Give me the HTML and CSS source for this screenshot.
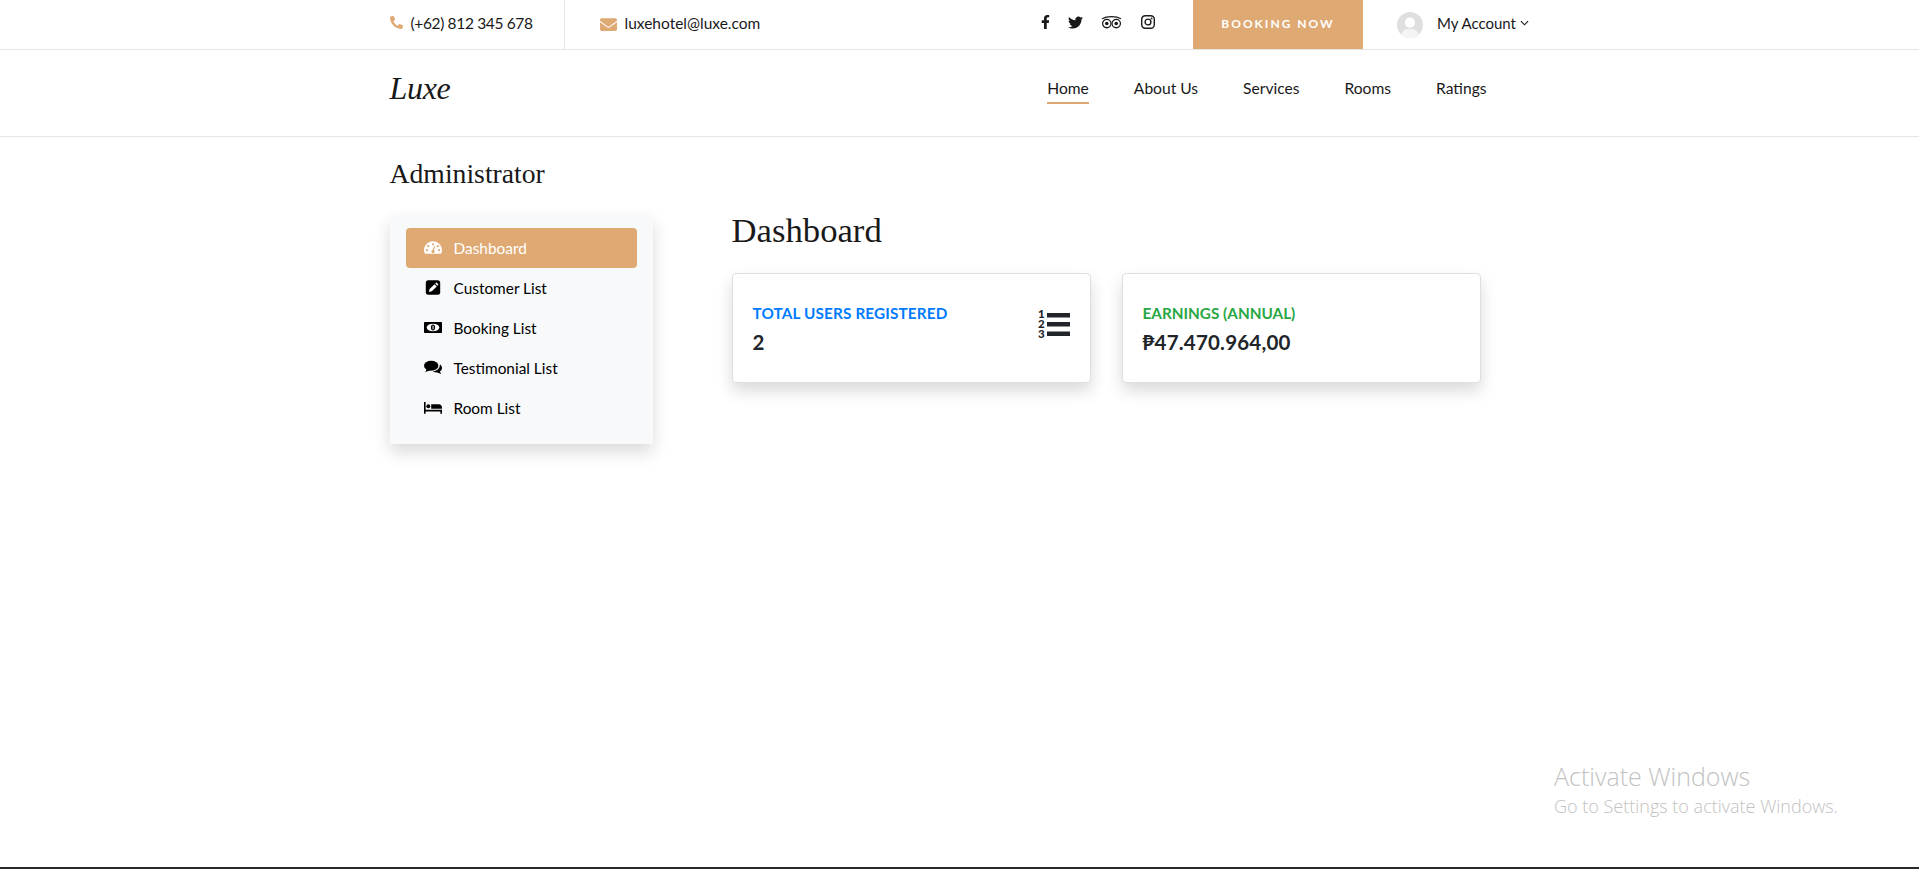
FILE: index.html
```html
<!DOCTYPE html>
<html lang="en">
<head>
<meta charset="utf-8">
<title>Luxe Hotel - Dashboard</title>
<link rel="stylesheet" href="styles.css">
</head>
<body>
<header class="topbar">
  <div class="container topbar-in">
    <div class="contact contact-phone">
      <svg class="ic-phone" viewBox="0 0 512 512"><path transform="matrix(-1 0 0 1 512 0)" d="M493.4 24.6l-104-24c-11.3-2.6-22.9 3.3-27.5 13.9l-48 112c-4.2 9.8-1.4 21.3 6.9 28l60.6 49.6c-36 76.7-98.9 140.5-177.2 177.2l-49.6-60.6c-6.8-8.3-18.2-11.1-28-6.9l-112 48C3.9 366.5-2 378.1.6 389.4l24 104C27.1 504.2 36.7 512 48 512c256.1 0 464-207.5 464-464 0-11.2-7.7-20.9-18.6-23.4z"/></svg>
      <span class="phone-num">(+62) 812 345 678</span>
    </div>
    <div class="contact contact-mail">
      <svg class="ic-mail" viewBox="0 0 512 512"><path d="M502.3 190.8c3.9-3.1 9.7-.2 9.7 4.7V400c0 26.5-21.5 48-48 48H48c-26.5 0-48-21.5-48-48V195.6c0-5 5.7-7.8 9.7-4.7 22.4 17.4 52.1 39.5 154.1 113.6 21.1 15.4 56.7 47.8 92.2 47.6 35.7.3 72-32.8 92.3-47.6 102-74.1 131.6-96.3 154-113.7zM256 320c23.2.4 56.6-29.2 73.4-41.4 132.7-96.3 142.8-104.7 173.4-128.7 5.8-4.5 9.2-11.5 9.2-18.9v-19c0-26.5-21.5-48-48-48H48C21.5 64 0 85.5 0 112v19c0 7.4 3.4 14.3 9.2 18.9 30.6 23.9 40.7 32.4 173.4 128.7 16.8 12.2 50.2 41.8 73.4 41.4z"/></svg>
      <span>luxehotel@luxe.com</span>
    </div>
    <div class="social">
      <svg class="s-fb" viewBox="0 0 320 512"><path d="M279.14 288l14.22-92.66h-88.91v-60.13c0-25.35 12.42-50.06 52.24-50.06h40.42V6.26S260.43 0 225.36 0c-73.22 0-121.08 44.38-121.08 124.72v70.62H22.89V288h81.39v224h100.17V288z"/></svg>
      <svg class="s-tw" viewBox="0 0 512 512"><path d="M459.37 151.716c.325 4.548.325 9.097.325 13.645 0 138.72-105.583 298.558-298.558 298.558-59.452 0-114.68-17.219-161.137-47.106 8.447.974 16.568 1.299 25.34 1.299 49.055 0 94.213-16.568 130.274-44.832-46.132-.975-84.792-31.188-98.112-72.772 6.498.974 12.995 1.624 19.818 1.624 9.421 0 18.843-1.3 27.614-3.573-48.081-9.747-84.143-51.98-84.143-102.985v-1.299c13.969 7.797 30.214 12.67 47.431 13.319-28.264-18.843-46.781-51.005-46.781-87.391 0-19.492 5.197-37.36 14.294-52.954 51.655 63.675 129.3 105.258 216.365 109.807-1.624-7.797-2.599-15.918-2.599-24.04 0-57.828 46.782-104.934 104.934-104.934 30.213 0 57.502 12.67 76.67 33.137 23.715-4.548 46.456-13.32 66.599-25.34-7.798 24.366-24.366 44.833-46.132 57.827 21.117-2.273 41.584-8.122 60.426-16.243-14.292 20.791-32.161 39.308-52.628 54.253z"/></svg>
      <svg class="s-ta" viewBox="0 0 40 24"><g fill="none" stroke="#1a1a1a" stroke-width="2.4"><circle cx="11" cy="14" r="8"/><circle cx="29" cy="14" r="8"/><path d="M2 5c5-3 10-4 18-4s13 1 18 4"/></g><circle cx="11" cy="14" r="3.4"/><circle cx="29" cy="14" r="3.4"/></svg>
      <svg class="s-ig" viewBox="0 0 24 24"><g fill="none" stroke="#1a1a1a" stroke-width="2.4"><rect x="1.2" y="1.2" width="21.6" height="21.6" rx="6"/><circle cx="12" cy="12" r="5"/></g><circle cx="18.2" cy="5.8" r="1.5"/></svg>
    </div>
    <a class="booking" href="#">BOOKING NOW</a>
    <div class="account">
      <svg class="avatar" viewBox="0 0 28 28"><circle cx="14" cy="14" r="14" fill="#dfdfdf"/><circle cx="14" cy="11.5" r="5.5" fill="#fff"/><path d="M4.5 24.5c1-4.5 5-6.5 9.500-6.500s8.500 2 9.500 6.500c-2.500 2.300-6 3.500-9.500 3.500s-7-1.200-9.500-3.500z" fill="#f4f4f4"/></svg>
      <span class="account-name">My Account</span>
      <svg class="chev" viewBox="0 0 10 6"><path d="M1 1l4 4 4-4" fill="none" stroke="#111" stroke-width="1.200"/></svg>
    </div>
  </div>
</header>

<nav class="mainnav">
  <div class="container mainnav-in">
    <a class="logo" href="#">Luxe</a>
    <ul class="menu">
      <li><a class="active" href="#">Home</a></li>
      <li><a href="#">About Us</a></li>
      <li><a href="#">Services</a></li>
      <li><a href="#">Rooms</a></li>
      <li><a href="#">Ratings</a></li>
    </ul>
  </div>
</nav>

<main class="container page">
  <h3 class="admin-title">Administrator</h3>
  <div class="layout">
    <aside class="sidebar">
      <a class="side-item is-active" href="#">
        <svg class="side-ic" viewBox="0 0 20 16"><path fill="currentColor" d="M10 1C4.500 1 0 5.500 0 11c0 1.700.5 3 1.300 4h17.400c.8-1 1.300-2.300 1.300-4 0-5.500-4.500-10-10-10z"/><g fill="#dfa974"><circle cx="10" cy="4.500" r="1.200"/><circle cx="4.700" cy="6.500" r="1.200"/><circle cx="15.300" cy="6.500" r="1.200"/><circle cx="3.200" cy="11" r="1.200"/><circle cx="16.800" cy="11" r="1.200"/><path d="M9 12l2.500-6 .8.300-1.600 6.200z"/><circle cx="10" cy="12.500" r="1.800"/></g></svg>
        <span>Dashboard</span>
      </a>
      <a class="side-item" href="#">
        <svg class="side-ic" viewBox="0 0 20 16"><rect x="2" y="0" width="16" height="16" rx="2.800" fill="#000"/><path fill="#fff" d="M5.500 13l.7-3.200 5.500-5.500 2.500 2.500-5.500 5.500zM12.500 3.500l.7-.7c.3-.3.7-.3 1 0l1.500 1.500c.3.3.3.7 0 1l-.7.7z"/></svg>
        <span>Customer List</span>
      </a>
      <a class="side-item" href="#">
        <svg class="side-ic" viewBox="0 0 20 16"><rect x="0" y="2" width="20" height="12" rx=".8" fill="#000"/><ellipse cx="10" cy="8" rx="7" ry="4.300" fill="#fff"/><ellipse cx="10" cy="8" rx="2.300" ry="3.400" fill="#000"/><rect x="9.500" y="6" width="1.100" height="4" fill="#fff"/></svg>
        <span>Booking List</span>
      </a>
      <a class="side-item" href="#">
        <svg class="side-ic" viewBox="0 0 20 16"><ellipse cx="8" cy="6" rx="8" ry="5.500" fill="#000"/><path d="M3 9.500L1.500 13 7 11z" fill="#000"/><path d="M17.600 4.500c1.500 1 2.400 2.500 2.400 4 0 1.500-.9 2.800-2.300 3.800l1.300 3-4.200-1.800c-2 .3-4-.2-5.300-1.200 4 .1 8.500-2.500 8.100-7.800z" fill="#000"/></svg>
        <span>Testimonial List</span>
      </a>
      <a class="side-item" href="#">
        <svg class="side-ic" viewBox="0 0 20 16"><path fill="#000" d="M0 2h1.800v8.500H20V15h-1.800v-2.500H1.800V15H0z"/><circle cx="4.800" cy="6.500" r="2.200" fill="#000"/><path fill="#000" d="M8 4.500h8.500c2 0 3.500 1.500 3.500 3.500v1.500H8z"/></svg>
        <span>Room List</span>
      </a>
    </aside>
    <section class="content">
      <h2 class="content-title">Dashboard</h2>
      <div class="cards">
        <article class="card">
          <div class="card-text">
            <div class="card-label label-blue">TOTAL USERS REGISTERED</div>
            <div class="card-value">2</div>
          </div>
          <svg class="card-ic" viewBox="0 0 32 32"><g fill="#212529" font-family="Lato, sans-serif" font-weight="900" font-size="11.5"><text x="0" y="10">1</text><text x="0" y="20">2</text><text x="0" y="30">3</text><rect x="9" y="5" width="23" height="4.500"/><rect x="9" y="14" width="23" height="4.500"/><rect x="9" y="23.500" width="23" height="4.500"/></g></svg>
        </article>
        <article class="card">
          <div class="card-text">
            <div class="card-label label-green">EARNINGS (ANNUAL)</div>
            <div class="card-value">₱47.470.964,00</div>
          </div>
        </article>
      </div>
    </section>
  </div>
</main>

<div class="watermark">
  <div class="wm-title">Activate Windows</div>
  <div class="wm-sub">Go to Settings to activate Windows.</div>
</div>
<footer class="footline"></footer>
</body>
</html>
```
FILE: styles.css
```css
* { box-sizing: border-box; }
html, body { margin: 0; padding: 0; }
body {
  min-height: 100vh;
  display: flex;
  flex-direction: column;
  background: #fff;
  color: #111;
  font-family: Lato, "Noto Sans", sans-serif;
  font-size: 15.5px;
  overflow: hidden;
}
a { color: inherit; text-decoration: none; }
.container { width: 1140px; margin: 0 auto; }

.topbar { height: 50px; border-bottom: 1px solid #e5e5e5; }
.topbar-in { display: flex; align-items: stretch; height: 49px; }
.contact { display: flex; align-items: center; font-size: 15.5px; color: #19191a; padding-bottom: 3px; }
.contact-phone { width: 175px; border-right: 1px solid #e5e5e5; }
.contact-mail { margin-left: 35px; width: 441px; }
.phone-num { letter-spacing: -.35px; }
.ic-phone { width: 13px; height: 13px; fill: #dfa974; margin-right: 8px; margin-top: -1px; }
.ic-mail { width: 17px; height: 17px; fill: #dfa974; margin-right: 8px; margin-top: 2px; }
.social { display: flex; align-items: center; width: 152.5px; padding-bottom: 5px; }
.social svg { fill: #19191a; flex: none; }
.s-fb { width: 9px; height: 14px; margin-right: 18.5px; }
.s-tw { width: 15px; height: 15px; margin-right: 18px; }
.s-ta { width: 21px; height: 13px; margin-right: 19px; }
.s-ig { width: 14px; height: 14px; }
.booking {
  width: 170px;
  background: #dfa974;
  color: #fff;
  font-size: 12px;
  font-weight: 700;
  letter-spacing: 2px;
  display: flex;
  align-items: center;
  justify-content: center;
  padding-bottom: 2px;
}
.account { display: flex; align-items: center; margin-left: 34px; color: #19191a; font-size: 15px; }
.account-name { padding-bottom: 3px; }
.avatar { width: 26px; height: 26px; margin-right: 14px; }
.chev { width: 9px; height: 6px; margin-left: 4px; margin-bottom: 3px; }

.mainnav { height: 87px; border-bottom: 1px solid #e5e5e5; }
.mainnav-in { display: flex; align-items: center; justify-content: space-between; height: 86px; padding-bottom: 9px; }
.logo { font-family: "Liberation Serif", serif; font-style: italic; font-size: 32px; letter-spacing: -.3px; color: #19191a; }
.menu { display: flex; gap: 45px; list-style: none; margin: 0 43px 0 0; padding: 0; }
.menu a { display: block; padding: 3px 0 2px; border-bottom: 2px solid transparent; color: #19191a; font-size: 15.6px; line-height: 24px; }
.menu a.active { border-bottom-color: #dfa974; }

.page { flex: 1; }
.admin-title { font-family: "Liberation Serif", serif; font-weight: 400; font-size: 27.7px; line-height: 32px; margin: 21px 0 0; color: #19191a; }
.layout { display: flex; margin-top: 22px; align-items: flex-start; }
.sidebar {
  width: 263px;
  margin-top: 3px;
  background: #f8f9fa;
  padding: 13px 16px 16px;
  box-shadow: 0 8px 16px rgba(0,0,0,.15);
  display: flex;
  flex-direction: column;
}
.side-item { display: flex; align-items: center; height: 40px; padding: 0 18px 1px; border-radius: 4px; color: #000; font-size: 15.4px; }
.side-item.is-active { background: #dfa974; color: #fff; }
.side-ic { width: 18px; height: 15px; margin-right: 12px; flex: none; }

.content { margin-left: 79px; width: 750px; }
.content-title { font-family: "Liberation Serif", serif; font-weight: 400; font-size: 34.7px; line-height: 38px; margin: 0; color: #19191a; }
.cards { display: grid; grid-template-columns: 359px 359px; gap: 31px; margin-top: 23px; }
.card {
  height: 110px;
  background: #fff;
  border: 1px solid #dfdfdf;
  border-radius: 4px;
  box-shadow: 0 8px 16px rgba(0,0,0,.15);
  padding: 20px;
  display: flex;
  justify-content: space-between;
  align-items: center;
}
.card-label { font-size: 15.3px; font-weight: 700; line-height: 20px; }
.label-blue { color: #007bff; letter-spacing: .14px; }
.label-green { color: #28a745; }
.card-value { font-size: 20.5px; font-weight: 700; letter-spacing: .2px; line-height: 24px; margin-top: 7px; color: #212529; }
.card-ic { width: 32px; height: 32px; margin-top: -8px; overflow: visible; }

.footline { height: 2px; background: #2b2b2b; flex: none; }
.watermark { position: absolute; left: 1554px; top: 761px; color: #c2c2c2; font-family: "Open Sans", sans-serif; font-weight: 300; }
.wm-title { font-size: 25px; line-height: 30px; }
.wm-sub { font-size: 18px; line-height: 30px; }
```
